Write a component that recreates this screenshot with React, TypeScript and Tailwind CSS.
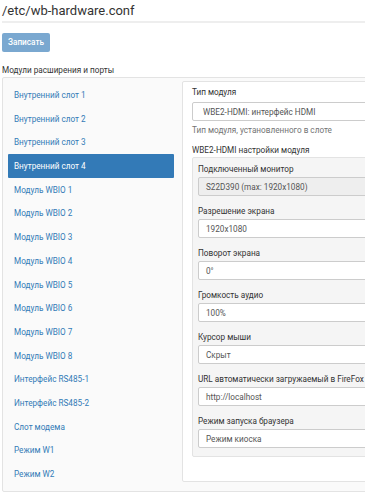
import React from 'react';

const slots = [
    'Внутренний слот 1',
    'Внутренний слот 2',
    'Внутренний слот 3',
    'Внутренний слот 4',
    'Модуль WBIO 1',
    'Модуль WBIO 2',
    'Модуль WBIO 3',
    'Модуль WBIO 4',
    'Модуль WBIO 5',
    'Модуль WBIO 6',
    'Модуль WBIO 7',
    'Модуль WBIO 8',
    'Интерфейс RS485-1',
    'Интерфейс RS485-2',
    'Слот модема',
    'Режим W1',
    'Режим W2',
];

const fields = [
    { label: 'Разрешение экрана', value: '1920x1080' },
    { label: 'Поворот экрана', value: '0°' },
    { label: 'Громкость аудио', value: '100%' },
    { label: 'Курсор мыши', value: 'Скрыт' },
    { label: 'URL автоматически загружаемый в FireFox', value: 'http://localhost' },
    { label: 'Режим запуска браузера', value: 'Режим киоска' },
];

function Field({ label, value, disabled, last }: { label: string; value: string; disabled?: boolean; last?: boolean }) {
    return (
        <div className={last ? '' : 'mb-[9px]'}>
            <div className="text-[8.2px] leading-[12px] text-[#333] mb-[2px]">{label}</div>
            <div
                className={`h-[19px] border border-[#ccc] rounded-[2px] px-[7px] flex items-center text-[8.2px] text-[#555] ${
                    disabled ? 'bg-[#eee]' : 'bg-white'
                }`}
            >
                {value}
            </div>
        </div>
    );
}

export default function App() {
    return (
        <div className="w-[365px] h-[500px] overflow-hidden bg-white font-['Roboto',sans-serif] text-[#333]">
            <div className="w-[620px] pl-[2px]">
                <h1 className="text-[13px] leading-[21px] font-normal text-[#333] border-b-2 border-[#eee]">
                    /etc/wb-hardware.conf
                </h1>

                <button className="mt-[10px] h-[19px] w-[48px] rounded-[2px] bg-[#7aa8d0] text-white text-[8.2px] font-medium">
                    Записать
                </button>

                <div className="mt-[12px] text-[8.2px] leading-[12px] text-[#333]">Модули расширения и порты</div>

                <div className="mt-[1px] border border-[#e3e3e3] rounded-[2px] bg-[#fafafa] pt-[3px] pb-[5px] pl-[5px] flex gap-[8px] items-start">
                    <div className="w-[166px] mt-[2px] flex flex-col">
                        {slots.map((s, i) => (
                            <div
                                key={s}
                                className={`h-[23.7px] flex items-center pl-[6px] text-[8.2px] rounded-[1px] ${
                                    i === 3 ? 'bg-[#337ab7] text-white' : 'text-[#337ab7]'
                                }`}
                            >
                                {s}
                            </div>
                        ))}
                    </div>

                    <div className="flex-1 border border-[#e3e3e3] rounded-[2px] bg-white pt-[4px] pl-[9px] pb-[24px]">
                        <div className="text-[8.2px] leading-[12px] text-[#333] mb-[4px]">Тип модуля</div>
                        <div className="h-[19px] border border-[#ccc] rounded-[2px] bg-white pl-[10px] flex items-center text-[8.2px] text-[#555]">
                            WBE2-HDMI: интерфейс HDMI
                        </div>
                        <div className="mt-[3px] text-[8.2px] leading-[12px] text-[#737373]">
                            Тип модуля, установленного в слоте
                        </div>
                        <div className="mt-[8px] text-[8.2px] leading-[12px] text-[#333]">WBE2-HDMI настройки модуля</div>
                        <div className="mt-[1px] border border-[#e3e3e3] rounded-[2px] bg-[#f5f5f5] pt-[5px] pb-[8px] pl-[5px]">
                            <Field label="Подключенный монитор" value="S22D390 (max: 1920x1080)" disabled />
                            {fields.map((f, i) => (
                                <Field key={f.label} label={f.label} value={f.value} last={i === fields.length - 1} />
                            ))}
                        </div>
                    </div>
                </div>
            </div>
        </div>
    );
}
